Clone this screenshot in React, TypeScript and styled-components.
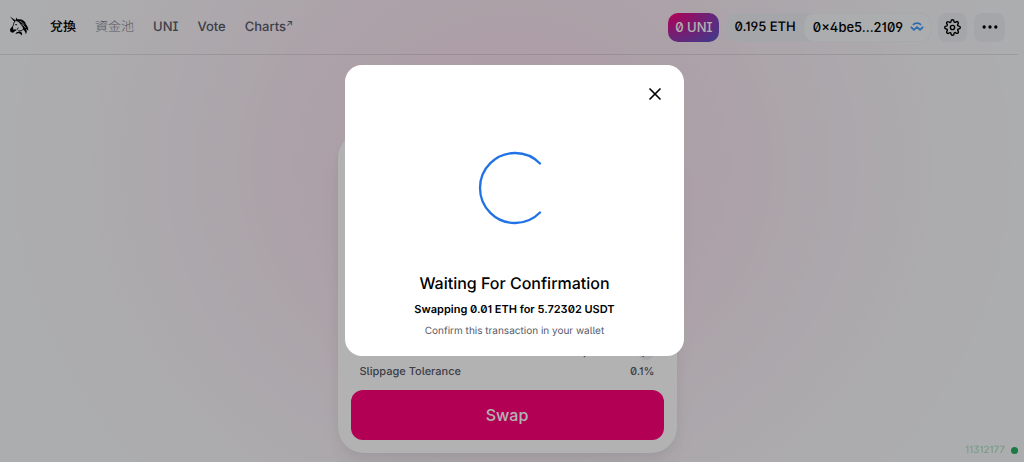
import React from 'react';
import styled, { createGlobalStyle } from 'styled-components';
import { FiMoreHorizontal, FiRepeat, FiSettings, FiX } from 'react-icons/fi';

const GlobalStyle = createGlobalStyle`
  * { box-sizing: border-box; }
  html { background: #f7f8fa; }
  body {
    margin: 0;
    color: #000;
    font-family: Inter, 'Noto Sans CJK TC', sans-serif;
    font-size: 13px;
    font-feature-settings: 'ss01' on, 'ss02' on, 'cv01' on, 'cv03' on;
    text-rendering: geometricPrecision;
  }
  button { font: inherit; font-feature-settings: inherit; border: 0; padding: 0; cursor: pointer; }
  p, h2, dl, dt, dd { margin: 0; }
`;

const Page = styled.div`
  display: flex;
  flex-direction: column;
  height: 100vh;
  overflow: hidden;
  background: radial-gradient(50% 100% at 50% 36%, #ff007a1e 0%, #ff007a12 40%, #ff007a05 75%, #ff007a00 100%);
`;

const Header = styled.header`
  display: flex;
  align-items: center;
  justify-content: space-between;
  margin-right: 6px;
  padding: 12px 13px 12px 9px;
  border-bottom: 1px solid #0000001a;
`;

const Nav = styled.nav`
  display: flex;
  align-items: center;
  gap: 19px;
  height: 30px;
`;

const LogoLink = styled.a`
  display: flex;
  color: #000;
`;

const NavLink = styled.a<{ $tone?: 'active' | 'muted' }>`
  color: ${({ $tone }) => ($tone === 'active' ? '#000' : $tone === 'muted' ? '#7d828f' : '#565a69')};
  font-weight: ${({ $tone }) => ($tone === 'muted' ? 300 : 500)};
  line-height: 16px;
  text-decoration: none;
`;

const Arrow = styled.span`
  font-size: 9px;
  line-height: 8px;
  vertical-align: 5px;
`;

const Controls = styled.div`
  display: flex;
  align-items: center;
  gap: 7px;
`;

const UniButton = styled.button`
  height: 29px;
  padding: 0 7px;
  border-radius: 10px;
  color: #fff;
  font-weight: 500;
  background: radial-gradient(174% 189% at 2% 0%, #ff007a 0%, #2172e5 100%), #edeef2;
`;

const Account = styled.div`
  display: flex;
  align-items: center;
  height: 29px;
  border-radius: 10px;
  background: #edeef2;
  font-weight: 500;
`;

const Balance = styled.span`
  padding: 0 8px;
`;

const AddressButton = styled.button`
  display: flex;
  align-items: center;
  gap: 7px;
  height: 29px;
  padding: 0 6px 0 8px;
  border: 1px solid #f1f2f5;
  border-radius: 10px;
  background: #f7f8fa;
  color: #000;
  font-weight: 500;
`;

const IconButton = styled.button<{ $width: number }>`
  display: flex;
  align-items: center;
  justify-content: center;
  width: ${({ $width }) => $width}px;
  height: 29px;
  border-radius: 8px;
  background: #edeef2;
  color: #000;
`;

const Main = styled.main`
  display: flex;
  flex-direction: column;
  align-items: center;
  padding: 77px 10px 0 0;
`;

const SwapCard = styled.section`
  display: flex;
  flex-direction: column;
  justify-content: flex-end;
  width: 100%;
  max-width: 339px;
  min-height: 321px;
  padding: 13px;
  border-radius: 26px;
  background: #fff;
  box-shadow: 0 0 1px #00000003, 0 4px 8px #0000000a, 0 16px 24px #0000000a, 0 24px 32px #00000003;
`;

const Details = styled.dl`
  display: flex;
  flex-direction: column;
  gap: 3px;
  padding: 0 9px 11px;
  color: #565a69;
  font-size: 11px;
  font-weight: 500;
  line-height: 16px;
`;

const DetailRow = styled.div`
  display: flex;
  align-items: center;
  justify-content: space-between;
`;

const PriceValue = styled.dd`
  display: flex;
  align-items: center;
  gap: 3px;
`;

const InvertButton = styled.button`
  display: flex;
  align-items: center;
  justify-content: center;
  width: 18px;
  height: 18px;
  border-radius: 50%;
  background: #edeef2;
  color: #000;
`;

const SwapButton = styled.button`
  height: 50px;
  border-radius: 12px;
  background: #ff007a;
  color: #fff;
  font-size: 16px;
  font-weight: 500;
`;

const BlockStatus = styled.div`
  position: fixed;
  right: 6px;
  bottom: 6px;
  display: flex;
  align-items: center;
  gap: 6px;
  color: #27ae6066;
  font-size: 10px;
  line-height: 12px;
`;

const StatusDot = styled.span`
  width: 7px;
  height: 7px;
  border-radius: 50%;
  background: #27ae60;
`;

const Overlay = styled.div`
  position: fixed;
  inset: 0;
  display: flex;
  align-items: flex-start;
  justify-content: center;
  padding: 65px 0 0 5px;
  background: rgba(0, 0, 0, 0.3);
`;

const Dialog = styled.div`
  display: flex;
  flex-direction: column;
  align-items: center;
  width: 100%;
  max-width: 339px;
  padding: 19px 19px 18px;
  border-radius: 17px;
  background: #fff;
  text-align: center;
`;

const CloseButton = styled.button`
  display: flex;
  align-self: flex-end;
  background: none;
  color: #000;
`;

const SpinnerArea = styled.div`
  display: flex;
  padding: 47px 0 46px;
`;

const DialogTitle = styled.h2`
  font-size: 16px;
  font-weight: 500;
  line-height: 24px;
`;

const Summary = styled.p`
  padding-top: 6px;
  font-size: 11px;
  font-weight: 600;
  line-height: 16px;
`;

const Hint = styled.p`
  padding-top: 7px;
  color: #565a69;
  font-size: 10px;
  line-height: 14px;
`;

const Unicorn = () => (
  <svg width="22" height="22" viewBox="0 0 22 22" fill="currentColor" aria-hidden="true">
    <path d="M.8.6 6.8 4.6 5.6 6Z" />
    <path d="M6.6 5 7.1 1.4 9.2 4.4Z" />
    <path d="M7.6 3.8C11.8 2.4 15.6 4.6 17.2 8L15.3 7.1C18 9 19.7 11.8 19.2 15C18.6 13.8 18 13.2 16.9 12.7C18.1 14.6 18 16.4 16.8 18.3C16.6 15.9 15.6 14.6 14.1 13.5C14.3 11.4 13 10 11.6 8.4C10.4 6.9 9.6 5.4 7.4 5.2Z" />
    <path d="M10.6 5.2Q13.6 6.2 15.1 8.8M12.4 8.2Q15.8 9.8 16.8 12.2" fill="none" stroke="#f7f8fa" strokeWidth=".7" />
    <path d="M6.4 5.2C4.3 6.5 4.5 8.4 4.2 9.8L1.8 13" fill="none" stroke="currentColor" strokeWidth=".9" />
    <path d="M3.8 10.6.9 13.6 1.6 16 4 16.8 5.4 15.5 7.8 14 6 13.3 4.5 13.9Z" />
    <path d="M5.8 8.2 8.2 8 7.2 9.6Z" />
    <path d="M8 13.8C8.5 12.8 8.9 12.4 9.2 11.6M14.2 13.2C13.4 14.8 11.2 15.2 9.4 14.6" fill="none" stroke="currentColor" strokeWidth=".9" />
    <path d="M6.4 17.8C8 15.3 11 15 12.6 16.4C13.6 17.4 13 18.8 12 19.6C12 18.2 11.2 17.4 10 17.3C8.6 17.2 7.8 18 6.4 17.8Z" />
  </svg>
);

const WalletMark = () => (
  <svg width="14" height="10" viewBox="0 0 14 10" fill="none" stroke="#3b99fc" strokeWidth="1.7" aria-hidden="true">
    <path d="M3 2.8C5.2.6 8.8.6 11 2.8M.8 4.8 4 7.9 7 5 10 7.9 13.2 4.8" strokeLinejoin="round" />
  </svg>
);

const Spinner = () => (
  <svg width="74" height="74" viewBox="0 0 74 74" fill="none" role="img" aria-label="Loading">
    <path d="M62 12.5A35 35 0 1 0 62 61.5" stroke="#2172e5" strokeWidth="2.3" strokeLinecap="round" />
  </svg>
);

export default function App() {
  return (
    <>
      <GlobalStyle />
      <Page>
        <Header>
          <Nav>
            <LogoLink href="#" aria-label="Uniswap"><Unicorn /></LogoLink>
            <NavLink href="#swap" $tone="active">兌換</NavLink>
            <NavLink href="#pool" $tone="muted">資金池</NavLink>
            <NavLink href="#uni">UNI</NavLink>
            <NavLink href="#vote">Vote</NavLink>
            <NavLink href="#charts">Charts<Arrow>↗</Arrow></NavLink>
          </Nav>
          <Controls>
            <UniButton>0 UNI</UniButton>
            <Account>
              <Balance>0.195 ETH</Balance>
              <AddressButton>0×4be5...2109<WalletMark /></AddressButton>
            </Account>
            <IconButton $width={29} aria-label="Settings"><FiSettings size={17} /></IconButton>
            <IconButton $width={31} aria-label="More"><FiMoreHorizontal size={20} /></IconButton>
          </Controls>
        </Header>
        <Main>
          <SwapCard>
            <Details>
              <DetailRow>
                <dt>Price</dt>
                <PriceValue>
                  0.00174733 ETH per USDT
                  <InvertButton aria-label="Invert price"><FiRepeat size={11} /></InvertButton>
                </PriceValue>
              </DetailRow>
              <DetailRow>
                <dt>Slippage Tolerance</dt>
                <dd>0.1%</dd>
              </DetailRow>
            </Details>
            <SwapButton>Swap</SwapButton>
          </SwapCard>
        </Main>
        <BlockStatus>11312177<StatusDot /></BlockStatus>
      </Page>
      <Overlay>
        <Dialog role="dialog" aria-modal="true" aria-labelledby="dialog-title">
          <CloseButton aria-label="Close"><FiX size={20} /></CloseButton>
          <SpinnerArea><Spinner /></SpinnerArea>
          <DialogTitle id="dialog-title">Waiting For Confirmation</DialogTitle>
          <Summary>Swapping 0.01 ETH for 5.72302 USDT</Summary>
          <Hint>Confirm this transaction in your wallet</Hint>
        </Dialog>
      </Overlay>
    </>
  );
}
